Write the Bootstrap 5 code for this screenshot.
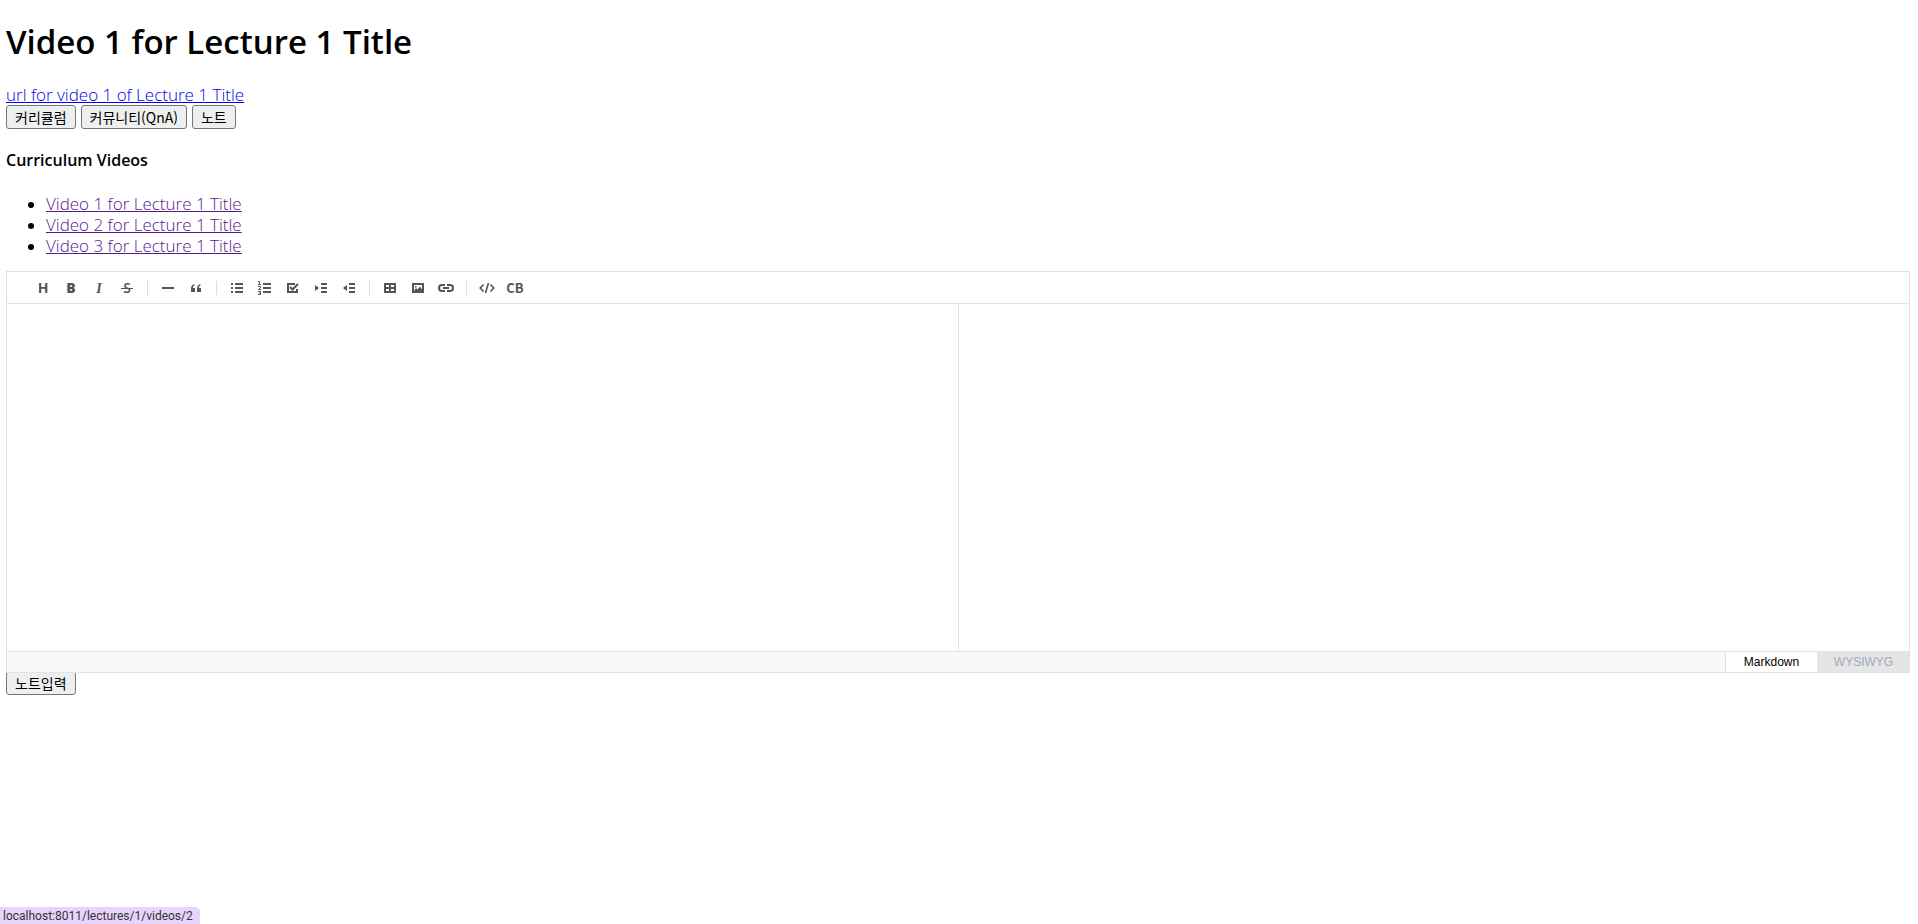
<!DOCTYPE html>
<html lang="ko">
<head>
<meta charset="utf-8">
<meta name="viewport" content="width=device-width, initial-scale=1">
<title>Video 1 for Lecture 1 Title</title>
<link href="https://cdn.jsdelivr.net/npm/bootstrap@5.3.0/dist/css/bootstrap.min.css" rel="stylesheet">
<style>
  body { font: 16px/21px "Open Sans", "Noto Sans CJK KR", sans-serif; color: #000; background: #fff; }
  .page { padding: 20px 8px 0 6px; }
  h1 { font-size: 33px; line-height: 43px; font-weight: 600; margin-bottom: 21px; }
  h2 { font-size: 16px; line-height: 21px; font-weight: 600; margin: 21px 0 22px; }
  .page a { color: #0000ee; font-size: 17px; font-weight: 300; }
  .video-list { padding-left: 40px; margin-bottom: 15px; }
  .video-list li { height: 21px; }
  .page .video-list a { color: #551a8b; }
  .view-row { gap: 5px; }
  .plain-btn { height: 24px; padding: 0 8px; border: 1px solid #767676; border-radius: 3px; background: #efefef; color: #000; font: 400 14px/20px "Noto Sans CJK KR", sans-serif; }
  .editor { border: 1px solid #e3e3e3; background: #fff; position: relative; z-index: 1; }
  .toolbar { height: 32px; padding: 0 22px; border-bottom: 1px solid #e3e3e3; }
  .tool { width: 28px; height: 32px; padding: 0 6px; border: 0; background: none; color: #555; font: 700 14px/16px "Open Sans", sans-serif; }
  .tool svg { display: block; width: 16px; height: 16px; overflow: visible; fill: currentColor; }
  .code-block { font: 700 13px "Noto Sans CJK KR", sans-serif; }
  .sep { width: 1px; height: 14px; margin: 0 6px; background: #dcdcdc; }
  .pane { height: 347px; border: 0; outline: 0; resize: none; background: #fff; }
  .pane + .pane { border-left: 1px solid #e3e3e3; }
  .modes { height: 21px; border-top: 1px solid #e3e3e3; background: #f9f9f9; font-family: "Liberation Sans", sans-serif; font-size: 12px; line-height: 18px; }
  .mode { width: 92px; padding: 0; border: 0; border-left: 1px solid #dcdcdc; background: #fff; color: #000; }
  .mode.off { border-color: #e5e5e5; background: #e5e5e5; color: #a0aabf; }
  .save { display: block; margin-top: -2px; }
  .status { padding: 1px 7px 0 3px; border-radius: 0 5px 0 0; background: #e8d3fd; color: #333; font: 12px/16px Roboto, sans-serif; }
</style>
</head>
<body>
<main class="page">
  <h1>Video 1 for Lecture 1 Title</h1>
  <a class="d-block" href="#">url for video 1 of Lecture 1 Title</a>
  <div class="d-flex view-row">
    <button type="button" class="plain-btn">커리큘럼</button>
    <button type="button" class="plain-btn">커뮤니티(QnA)</button>
    <button type="button" class="plain-btn">노트</button>
  </div>
  <h2>Curriculum Videos</h2>
  <ul class="video-list">
    <li><a href="#">Video 1 for Lecture 1 Title</a></li>
    <li><a href="#">Video 2 for Lecture 1 Title</a></li>
    <li><a href="#">Video 3 for Lecture 1 Title</a></li>
  </ul>
  <section class="editor">
    <div class="toolbar d-flex align-items-center" role="toolbar" aria-label="Editor">
      <button type="button" class="tool" aria-label="Headings"><svg viewBox="0 0 16 16"><text x="8" y="13" text-anchor="middle">H</text></svg></button>
      <button type="button" class="tool" aria-label="Bold"><svg viewBox="0 0 16 16"><text x="8" y="13" text-anchor="middle" font-weight="800">B</text></svg></button>
      <button type="button" class="tool" aria-label="Italic"><svg viewBox="0 0 16 16"><text x="8" y="13" text-anchor="middle" font-style="italic" font-family="Liberation Serif, serif">I</text></svg></button>
      <button type="button" class="tool" aria-label="Strike"><svg viewBox="0 0 16 16"><text x="8" y="13" text-anchor="middle" font-weight="600">S</text><path d="M2 8h12v1H2z"/></svg></button>
      <span class="sep"></span>
      <button type="button" class="tool" aria-label="Line"><svg viewBox="0 0 16 16"><path d="M2 7h12v2H2z"/></svg></button>
      <button type="button" class="tool" aria-label="Blockquote"><svg viewBox="0 0 16 16"><path d="M6.500 4C4 4.500 3 6.500 3 9v3h4V8H5c0-1.500.5-2.300 1.500-2.700zM12.500 4C10 4.500 9 6.500 9 9v3h4V8h-2c0-1.500.5-2.300 1.500-2.700z"/></svg></button>
      <span class="sep"></span>
      <button type="button" class="tool" aria-label="Unordered list"><svg viewBox="0 0 16 16"><path d="M2 3h2v2H2zM6 3h8v2H6zM2 7h2v2H2zM6 7h8v2H6zM2 11h2v2H2zM6 11h8v2H6z"/></svg></button>
      <button type="button" class="tool" aria-label="Ordered list"><svg viewBox="0 0 16 16"><path d="M6 3h8v2H6zM6 7h8v2H6zM6 11h8v2H6z"/><path fill="none" stroke="currentColor" d="M1 1.500h1.500V4.500M1 4.500h3M1 6.500h2.500v1.200L1.500 9.500H4M1 11.500h2.500v3H1M2 13h1.500"/></svg></button>
      <button type="button" class="tool" aria-label="Task"><svg viewBox="0 0 16 16"><path fill="none" stroke="currentColor" stroke-width="2" d="M10 4H3v8h9V9M5 7l2.500 2.500L13 4"/></svg></button>
      <button type="button" class="tool" aria-label="Indent"><svg viewBox="0 0 16 16"><path d="M2 5v6l4-3zM8 3h6v2H8zM8 7h6v2H8zM8 11h6v2H8z"/></svg></button>
      <button type="button" class="tool" aria-label="Outdent"><svg viewBox="0 0 16 16"><path d="M6 5v6L2 8zM8 3h6v2H8zM8 7h6v2H8zM8 11h6v2H8z"/></svg></button>
      <span class="sep"></span>
      <button type="button" class="tool" aria-label="Insert table"><svg viewBox="0 0 16 16"><path fill-rule="evenodd" d="M2 3h12v10H2zM4 5v2h3V5zM9 5v2h3V5zM4 9v2h3V9zM9 9v2h3V9z"/></svg></button>
      <button type="button" class="tool" aria-label="Insert image"><svg viewBox="0 0 16 16"><path fill-rule="evenodd" d="M2 3h12v10H2zM4 5v6h8V5z"/><path d="M4 11l2-3 1.500 1.500L10 6.500l2 3V11zM5 6h1.500v1.500H5z"/></svg></button>
      <button type="button" class="tool" aria-label="Insert link"><svg viewBox="0 0 16 16"><path fill="none" stroke="currentColor" stroke-width="2" d="M7 5H4a3 3 0 0 0 0 6h3M9 5h3a3 3 0 0 1 0 6H9M5 8h6"/></svg></button>
      <span class="sep"></span>
      <button type="button" class="tool" aria-label="Inline code"><svg viewBox="0 0 16 16"><path fill="none" stroke="currentColor" stroke-width="1.600" d="M4.500 4.500L1.200 8l3.300 3.500M11.500 4.500L14.800 8l-3.300 3.500M9.500 3l-3 10"/></svg></button>
      <button type="button" class="tool" aria-label="Code block"><svg viewBox="0 0 16 16"><text class="code-block" x="8" y="13" text-anchor="middle">CB</text></svg></button>
    </div>
    <div class="d-flex">
      <textarea class="pane w-50" aria-label="Markdown source"></textarea>
      <div class="pane w-50"></div>
    </div>
    <div class="modes d-flex justify-content-end">
      <button type="button" class="mode">Markdown</button>
      <button type="button" class="mode off">WYSIWYG</button>
    </div>
  </section>
  <button type="button" class="plain-btn save">노트입력</button>
</main>
<div class="status position-fixed bottom-0 start-0">localhost:8011/lectures/1/videos/2</div>
<script src="https://cdn.jsdelivr.net/npm/bootstrap@5.3.0/dist/js/bootstrap.bundle.min.js"></script>
</body>
</html>
